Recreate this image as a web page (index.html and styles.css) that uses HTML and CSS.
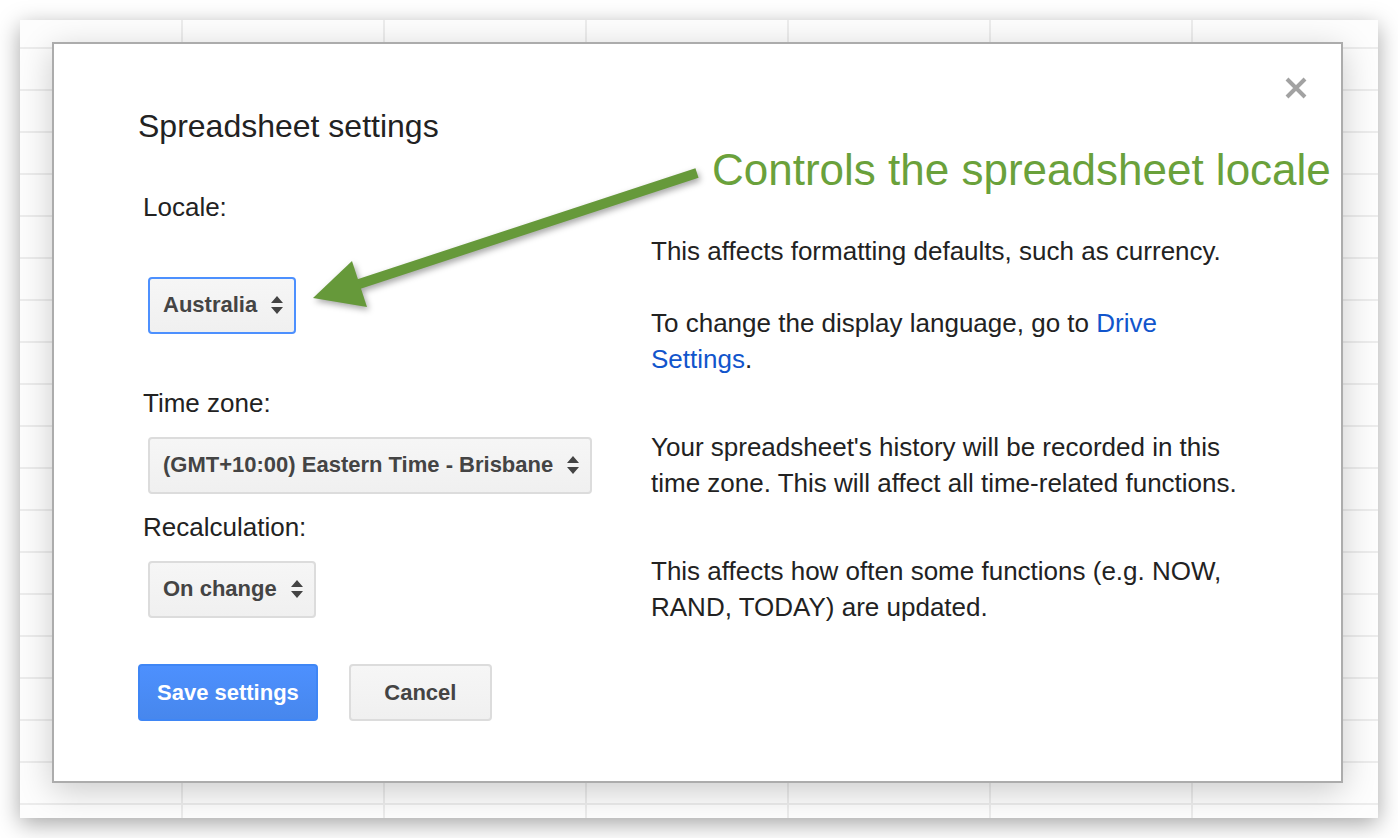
FILE: index.html
```html
<!DOCTYPE html>
<html lang="en">
<head>
    <meta charset="UTF-8">
    <meta name="viewport" content="width=device-width, initial-scale=1.0">
    <title>Spreadsheet settings</title>
    <link rel="stylesheet" href="styles.css">
</head>
<body>
    <div class="window">
        <div class="dialog">
            <button class="close-btn" aria-label="Close">
                <svg width="24" height="24" viewBox="0 0 24 24">
                    <path d="M3 3 L21 21 M21 3 L3 21" stroke="#999" stroke-width="4" fill="none"/>
                </svg>
            </button>

            <h1 class="dialog-title">Spreadsheet settings</h1>

            <div class="setting">
                <div class="setting-label">Locale:</div>
                <div class="setting-row">
                    <div class="setting-control">
                        <div class="menu-button focused">
                            <span>Australia</span>
                            <svg class="updown" width="12" height="18" viewBox="0 0 12 18">
                                <path d="M0 7 L6 0 L12 7 Z M0 11 L6 18 L12 11 Z" fill="#444"/>
                            </svg>
                        </div>
                    </div>
                    <div class="setting-help">
                        <p>This affects formatting defaults, such as currency.</p>
                        <p>To change the display language, go to <a href="#">Drive Settings</a>.</p>
                    </div>
                </div>
            </div>

            <div class="setting">
                <div class="setting-label">Time zone:</div>
                <div class="setting-row">
                    <div class="setting-control">
                        <div class="menu-button">
                            <span>(GMT+10:00) Eastern Time - Brisbane</span>
                            <svg class="updown" width="12" height="18" viewBox="0 0 12 18">
                                <path d="M0 7 L6 0 L12 7 Z M0 11 L6 18 L12 11 Z" fill="#444"/>
                            </svg>
                        </div>
                    </div>
                    <div class="setting-help">
                        <p>Your spreadsheet's history will be recorded in this time zone. This will affect all time-related functions.</p>
                    </div>
                </div>
            </div>

            <div class="setting">
                <div class="setting-label">Recalculation:</div>
                <div class="setting-row">
                    <div class="setting-control">
                        <div class="menu-button">
                            <span>On change</span>
                            <svg class="updown" width="12" height="18" viewBox="0 0 12 18">
                                <path d="M0 7 L6 0 L12 7 Z M0 11 L6 18 L12 11 Z" fill="#444"/>
                            </svg>
                        </div>
                    </div>
                    <div class="setting-help">
                        <p>This affects how often some functions (e.g. NOW, RAND, TODAY) are updated.</p>
                    </div>
                </div>
            </div>

            <div class="button-row">
                <button class="btn btn-primary">Save settings</button>
                <button class="btn">Cancel</button>
            </div>
        </div>
    </div>

    <!-- annotation drawn on top of the screenshot -->
    <div class="callout">Controls the spreadsheet locale</div>
    <svg class="callout-arrow" width="1398" height="838" viewBox="0 0 1398 838">
        <line x1="697" y1="173" x2="356" y2="285" stroke="#66993a" stroke-width="10"/>
        <polygon points="313,298 352,261 367,307" fill="#66993a"/>
    </svg>
</body>
</html>
```

FILE: styles.css
```css
* {
    margin: 0;
    padding: 0;
    box-sizing: border-box;
    font-family: "Liberation Sans", Arial, sans-serif;
}

body {
    background-color: #fff;
    width: 1398px;
    height: 838px;
    overflow: hidden;
    position: relative;
}

.window {
    margin: 20px;
    width: 1358px;
    height: 798px;
    padding: 22px 0 0 32px;
    background-color: #fdfdfd;
    background-image:
        linear-gradient(to right, #ececec 2px, transparent 2px),
        linear-gradient(to bottom, #ececec 2px, transparent 2px);
    background-size: 202px 100%, 100% 42px;
    background-position: 161px 0, 0 27px;
    box-shadow: 0 6px 22px rgba(0,0,0,0.35);
}

.dialog {
    position: relative;
    width: 1291px;
    height: 741px;
    background-color: #fff;
    border: 2px solid #acacac;
    padding: 63px 0 0 84px;
    box-shadow: 0 8px 32px rgba(0,0,0,0.2);
}

.close-btn {
    position: absolute;
    top: 32px;
    right: 33px;
    width: 24px;
    height: 24px;
    border: none;
    background: none;
    opacity: 0.9;
}

.close-btn svg {
    display: block;
}

.dialog-title {
    font-size: 32px;
    line-height: 38px;
    font-weight: normal;
    color: #222;
    margin-bottom: 47px;
}

.setting-label {
    font-size: 26px;
    line-height: 30px;
    color: #222;
    padding-left: 5px;
    margin-bottom: 11px;
}

.setting-row {
    display: grid;
    grid-template-columns: 513px 600px;
    align-items: center;
    margin-bottom: 11px;
}

.setting-control {
    padding-left: 10px;
}

.menu-button {
    display: inline-flex;
    align-items: center;
    gap: 14px;
    height: 57px;
    padding: 0 11px 0 13px;
    border: 2px solid #dcdcdc;
    border-radius: 4px;
    background: linear-gradient(#f6f6f6, #f0f0f0);
    color: #444;
    font-size: 22px;
    font-weight: bold;
    white-space: nowrap;
}

.menu-button.focused {
    border-color: #4d90fe;
}

.updown {
    display: block;
    flex-shrink: 0;
}

.setting-help {
    font-size: 26px;
    line-height: 36px;
    color: #222;
}

.setting-help p + p {
    margin-top: 36px;
}

.setting-help a {
    color: #15c;
    text-decoration: none;
}

/* margin collapses with the last row's 11px */
.button-row {
    display: flex;
    gap: 31px;
    margin-top: 39px;
}

.btn {
    height: 57px;
    min-width: 143px;
    padding: 0 17px;
    border: 2px solid #dcdcdc;
    border-radius: 4px;
    background: linear-gradient(#f6f6f6, #f0f0f0);
    color: #444;
    font-size: 22px;
    font-weight: bold;
    cursor: pointer;
}

.btn-primary {
    background: linear-gradient(#4d90fe, #4787ed);
    border-color: #3f86f5;
    color: #fff;
}

.callout {
    position: absolute;
    left: 712px;
    top: 148px;
    font-size: 44px;
    line-height: 44px;
    color: #6aa13b;
    white-space: nowrap;
}

.callout-arrow {
    position: absolute;
    left: 0;
    top: 0;
    pointer-events: none;
    filter: drop-shadow(2px 3px 3px rgba(0,0,0,0.35));
}
```
